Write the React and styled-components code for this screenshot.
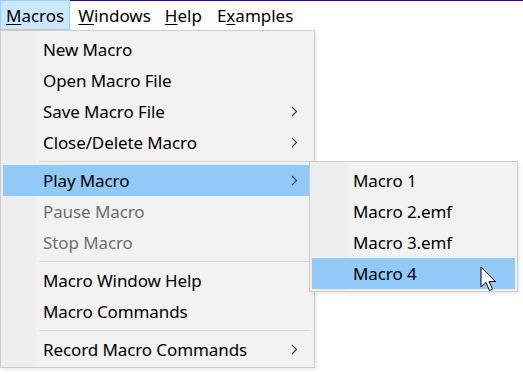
import React from 'react';
import styled, { createGlobalStyle } from 'styled-components';

const Global = createGlobalStyle`
  html, body {
    margin: 0;
    background: #fff;
  }
  body {
    font-family: "Noto Sans", "Open Sans", sans-serif;
    font-size: 17px;
    color: #000;
  }
`;

const Page = styled.div`
  position: relative;
  width: 523px;
  height: 374px;
  overflow: hidden;
`;

const Bar = styled.div`
  display: flex;
  align-items: stretch;
  height: 29px;
  border-top: 1px solid #2b0f7c;
`;

const BarItem = styled.div`
  display: flex;
  align-items: center;
  box-sizing: border-box;
  height: ${p => (p.$open ? '30px' : '29px')};
  margin-top: ${p => (p.$open ? '-1px' : '0')};
  padding: 0 ${p => (p.$open ? '5px' : '5px')};
  margin-right: ${p => p.$gap || 0}px;
  background: ${p => (p.$open ? '#cce8ff' : 'transparent')};
  border: ${p => (p.$open ? '1px solid #99d1ff' : 'none')};
`;

const Key = styled.span`
  text-decoration: underline;
  text-underline-offset: 2px;
  text-decoration-thickness: 1px;
`;

const Dropdown = styled.div`
  position: absolute;
  left: ${p => p.$x}px;
  top: ${p => p.$y}px;
  width: ${p => p.$w}px;
  box-sizing: border-box;
  padding: 3px 2px 2px 2px;
  border: 1px solid #cccccc;
  background: linear-gradient(to right, #eeeeee 0, #eeeeee ${p => p.$gutter}px, #f2f2f2 ${p => p.$gutter}px);
  box-shadow: 2px 2px 3px rgba(0, 0, 0, 0.08);
  z-index: ${p => p.$z || 1};
`;

const Item = styled.div`
  position: relative;
  display: flex;
  align-items: center;
  height: 31px;
  padding-left: ${p => p.$indent}px;
  padding-right: 14px;
  background: ${p => (p.$active ? '#91c9f7' : 'transparent')};
  color: ${p => (p.$disabled ? '#6d6d6d' : '#000')};
  letter-spacing: -0.1px;
  white-space: nowrap;
`;

const Label = styled.span`
  flex: 1;
`;

const Separator = styled.div`
  height: 7px;
  display: flex;
  align-items: center;
  padding-left: 36px;
  padding-right: 2px;

  &::after {
    content: '';
    flex: 1;
    height: 1px;
    background: #d7d7d7;
  }
`;

const Cursor = styled.svg`
  position: absolute;
  left: 480px;
  top: 266px;
  z-index: 5;
`;

function Chevron() {
  return (
    <svg width="7" height="11" viewBox="0 0 7 11">
      <path d="M1 1 L5.5 5.5 L1 10" fill="none" stroke="#333" strokeWidth="1.1" />
    </svg>
  );
}

const subItems = ['Macro 1', 'Macro 2.emf', 'Macro 3.emf', 'Macro 4'];

export default function App() {
  return (
    <Page>
      <Global />
      <Bar>
        <BarItem $open $gap={3}><Key>M</Key>acros</BarItem>
        <BarItem $gap={4}><Key>W</Key>indows</BarItem>
        <BarItem $gap={5}><Key>H</Key>elp</BarItem>
        <BarItem>E<Key>x</Key>amples</BarItem>
      </Bar>

      <Dropdown $x={0} $y={30} $w={315} $gutter={35}>
        <Item $indent={40}><Label>New Macro</Label></Item>
        <Item $indent={40}><Label>Open Macro File</Label></Item>
        <Item $indent={40}><Label>Save Macro File</Label><Chevron /></Item>
        <Item $indent={40}><Label>Close/Delete Macro</Label><Chevron /></Item>
        <Separator />
        <Item $indent={40} $active>
          <Label>Play Macro</Label><Chevron />
          <Dropdown $x={306} $y={-4} $w={209} $gutter={38} $z={3}>
            {subItems.map((s, i) => (
              <Item key={s} $indent={41} $active={i === 3}><Label>{s}</Label></Item>
            ))}
          </Dropdown>
        </Item>
        <Item $indent={40} $disabled><Label>Pause Macro</Label></Item>
        <Item $indent={40} $disabled><Label>Stop Macro</Label></Item>
        <Separator />
        <Item $indent={40}><Label>Macro Window Help</Label></Item>
        <Item $indent={40}><Label>Macro Commands</Label></Item>
        <Separator />
        <Item $indent={40}><Label>Record Macro Commands</Label><Chevron /></Item>
      </Dropdown>

      <Cursor width="20" height="28" viewBox="0 0 20 28">
        <path
          d="M1 1 L1 21 L6 16.5 L9.5 24.5 L12.5 23.2 L9 15.5 L15.5 15.5 Z"
          fill="#fff"
          stroke="#000"
          strokeWidth="1"
          strokeLinejoin="miter"
        />
      </Cursor>
    </Page>
  );
}
